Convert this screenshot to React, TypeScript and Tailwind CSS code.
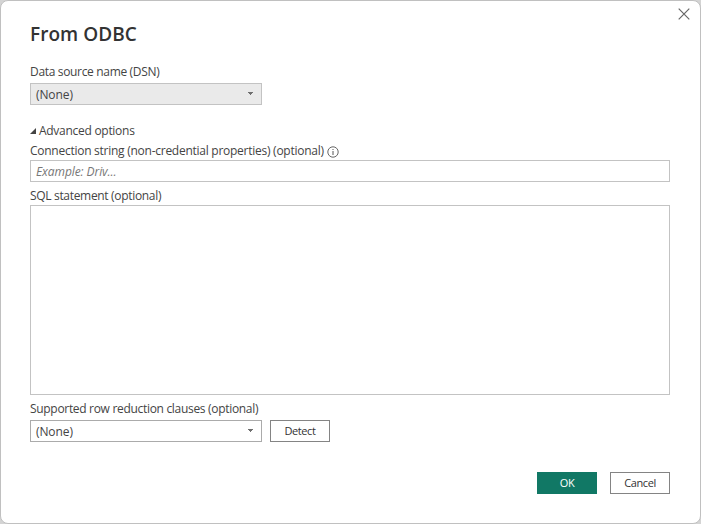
import type { ReactNode } from "react";

function Label({ children, className = "" }: { children: ReactNode; className?: string }) {
  return <div className={`flex h-4 items-center whitespace-nowrap text-[12px] leading-4 ${className}`}>{children}</div>;
}

function Select({ value, className }: { value: string; className: string }) {
  return (
    <button className={`flex h-[22px] w-[232px] items-center justify-between border pr-[8px] pl-[5px] text-[12px] leading-4 ${className}`}>
      <span className="pt-[2px] tracking-[-0.1px]">{value}</span>
      <svg width="5" height="3" viewBox="0 0 5 3" className="mb-[1px]" shapeRendering="crispEdges" fill="#6f6f6f">
        <path d="M0 0h5v1H0zM1 1h3v1H1zM2 2h1v1H2z" />
      </svg>
    </button>
  );
}

export default function App() {
  return (
    <div className="h-[524px] w-[701px] bg-[#d4d4d4] font-['Open_Sans','Noto_Sans',sans-serif] text-[#444]">
      <main className="flex h-full w-full flex-col rounded-lg border border-[#c0c0c0] bg-white pr-[30px] pl-[29px]">
        <header className="flex h-[63px] justify-between">
          <h1 className="mt-[19px] h-7 whitespace-nowrap text-[19px] leading-7 font-semibold text-[#333]">
            <span className="tracking-[0.05px]">From ODBC</span>
          </h1>
          <button aria-label="Close" className="mt-[7px] -mr-[20px] h-3 w-3">
            <svg width="12" height="12" viewBox="0 0 12 12" stroke="#666" strokeWidth="1.2" fill="none">
              <path d="M.7.7l10.6 10.6M11.3.7L.7 11.3" />
            </svg>
          </button>
        </header>

        <Label><span className="tracking-[-0.33px]">Data source name (DSN)</span></Label>
        <Select value="(None)" className="mt-[3px] border-[#c3c3c3] bg-[#eaeaea]" />

        <Label className="mt-[18px] gap-[3px]">
          <svg width="6" height="6" viewBox="0 0 6 6" fill="#444"><path d="M6 0v6H0z" /></svg>
          <span className="tracking-[-0.28px]">Advanced options</span>
        </Label>
        <Label className="mt-[4px] gap-[3px]">
          <span className="tracking-[-0.26px]">Connection string (non-credential properties) (optional)</span>
          <svg width="12" height="12" viewBox="0 0 12 12" fill="none" stroke="#555" className="mt-px">
            <circle cx="6" cy="6" r="5.2" strokeWidth=".9" />
            <path d="M6 5v4M6 3v1" />
          </svg>
        </Label>
        <input
          placeholder="Example: Driv..."
          className="mt-[1px] h-[22px] w-full shrink-0 border border-[#c3c3c3] px-[5px] text-[12px] tracking-[-0.08px] outline-none placeholder:text-[#777] placeholder:italic"
        />
        <Label className="mt-[6px]"><span className="tracking-[-0.32px]">SQL statement (optional)</span></Label>
        <textarea className="mt-[1px] h-[190px] w-full shrink-0 resize-none border border-[#c3c3c3] outline-none" />
        <Label className="mt-[6px]"><span className="tracking-[-0.31px]">Supported row reduction clauses (optional)</span></Label>
        <div className="mt-[3px] flex gap-2">
          <Select value="(None)" className="border-[#ababab] bg-white" />
          <button className="h-[22px] w-[60px] border border-[#848484] text-[11px] leading-5 tracking-[-0.4px] text-[#333]">Detect</button>
        </div>
        <footer className="mt-[30px] flex justify-end gap-[13px] text-[11px] leading-5 tracking-[-0.4px]">
          <button className="h-[22px] w-[60px] bg-[#117865] text-white">OK</button>
          <button className="h-[22px] w-[60px] border border-[#848484] text-[#333]">Cancel</button>
        </footer>
      </main>
    </div>
  );
}
